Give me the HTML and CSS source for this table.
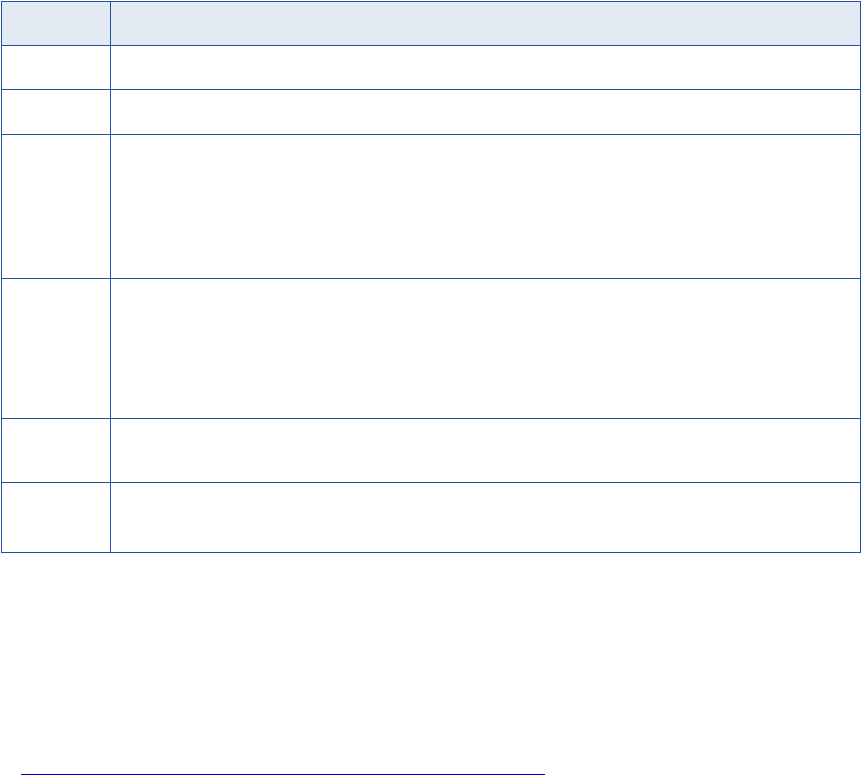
FILE: index.html
```html
<!DOCTYPE html>
<html>
<head>
<meta charset="utf-8">
<link rel="stylesheet" href="styles.css">
</head>
<body>
<div class="grid">
  <div class="row head h44"><div class="cell"></div><div class="cell"></div></div>
  <div class="row h44"><div class="cell"></div><div class="cell"></div></div>
  <div class="row h45"><div class="cell"></div><div class="cell"></div></div>
  <div class="row h144"><div class="cell"></div><div class="cell"></div></div>
  <div class="row h140"><div class="cell"></div><div class="cell"></div></div>
  <div class="row h64"><div class="cell"></div><div class="cell"></div></div>
  <div class="row h70"><div class="cell"></div><div class="cell"></div></div>
</div>
<div class="footline"></div>
</body>
</html>
```
FILE: styles.css
```css
html, body {
  margin: 0;
  padding: 0;
  background: #ffffff;
  font-family: "Liberation Sans", Arial, sans-serif;
  overflow: hidden;
}
.grid {
  margin: 1px 0 0 1px;
  border-top: 1px solid #2350a6;
  border-left: 1px solid #2350a6;
  width: 860px;
  box-sizing: border-box;
}
.row {
  display: grid;
  grid-template-columns: 109px 1fr;
}
.cell {
  border-right: 1px solid #2350a6;
  border-bottom: 1px solid #2350a6;
  box-sizing: border-box;
}
.head .cell { background: #e4eaf4; }
.h44 { height: 44px; }
.h45 { height: 45px; }
.h144 { height: 144px; }
.h140 { height: 140px; }
.h64 { height: 64px; }
.h70 { height: 70px; }
.footline {
  margin: 221px 0 0 21px;
  width: 524px;
  height: 1px;
  background: #0000c4;
}
```
